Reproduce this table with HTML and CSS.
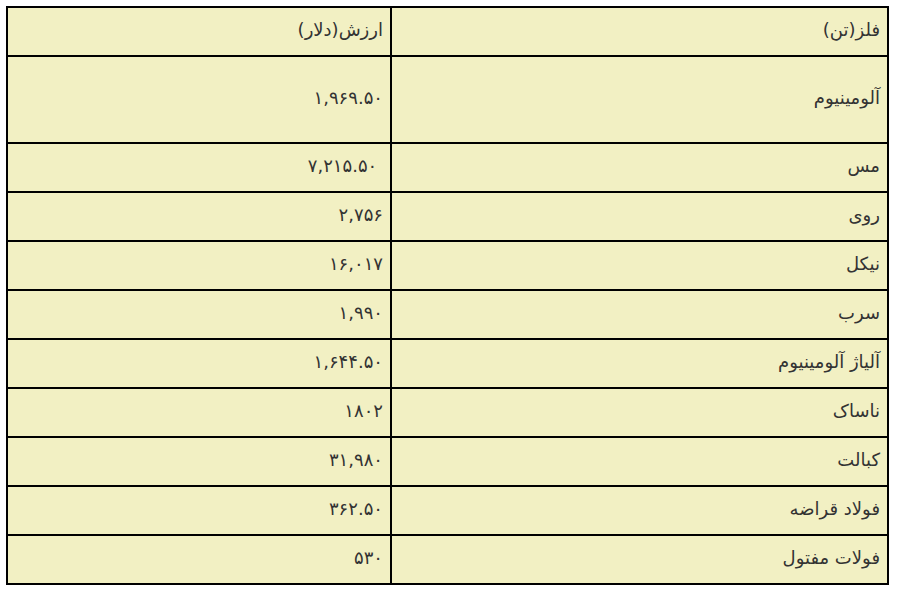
FILE: index.html
```html
<!DOCTYPE html>
<html lang="fa" dir="rtl">
<head>
<meta charset="utf-8">
<link rel="stylesheet" href="styles.css">
</head>
<body>
<table class="metals">
  <tr><td class="c-name">فلز(تن)</td><td class="c-val">ارزش(دلار)</td></tr>
  <tr class="tall"><td>آلومینیوم</td><td>۱,۹۶۹.۵۰</td></tr>
  <tr><td>مس</td><td>&nbsp;۷,۲۱۵.۵۰</td></tr>
  <tr><td>روی</td><td>۲,۷۵۶</td></tr>
  <tr><td>نیکل</td><td>۱۶,۰۱۷</td></tr>
  <tr><td>سرب</td><td>۱,۹۹۰</td></tr>
  <tr><td>آلیاژ آلومینیوم</td><td>۱,۶۴۴.۵۰</td></tr>
  <tr><td>ناساک</td><td>۱۸۰۲</td></tr>
  <tr><td>کبالت</td><td>۳۱,۹۸۰</td></tr>
  <tr><td>فولاد قراضه</td><td>۳۶۲.۵۰</td></tr>
  <tr><td>فولات مفتول</td><td>۵۳۰</td></tr>
</table>
</body>
</html>
```

FILE: styles.css
```css
html, body {
  margin: 0;
  padding: 0;
  background: #ffffff;
}
body {
  padding: 6px 8px 0 6px;
  font-family: "DejaVu Sans", sans-serif;
  font-size: 18px;
  color: #333333;
}
.metals {
  border-collapse: separate;
  border-spacing: 0;
  width: 883px;
  background: #f2f0c3;
  border-top: 2px solid #000;
  border-left: 2px solid #000;
}
.metals td {
  border-right: 2px solid #000;
  border-bottom: 2px solid #000;
  padding: 0 7px 3px 7px;
  text-align: right;
  vertical-align: middle;
  box-sizing: border-box;
  height: 49px;
  line-height: 20px;
}
.metals td:first-child {
  width: 497px;
}
.metals tr.tall td {
  height: 87px;
}
```
